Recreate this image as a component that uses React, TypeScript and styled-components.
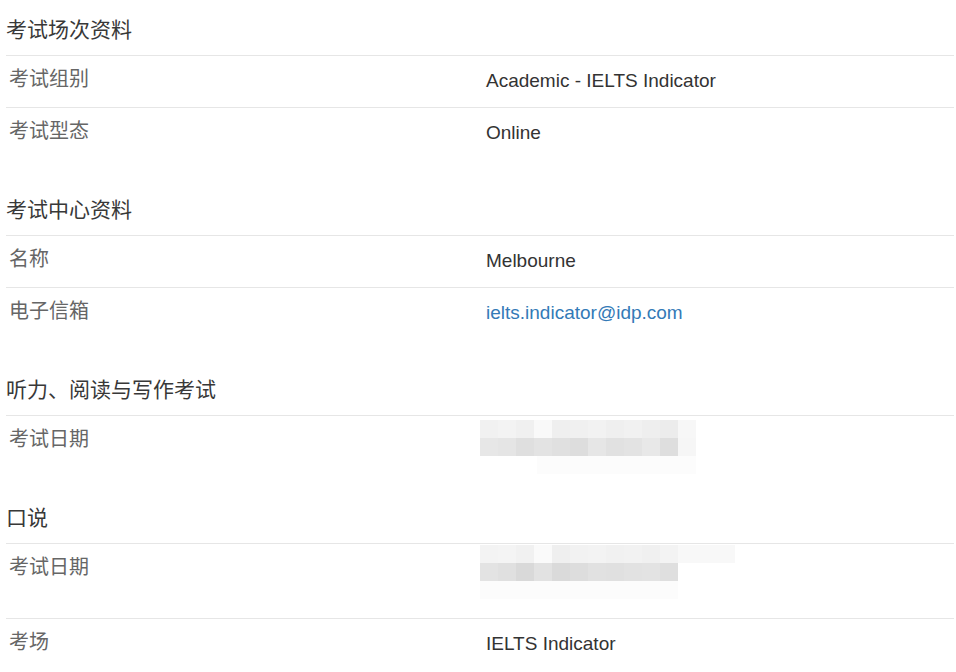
import React from "react";
import styled, { createGlobalStyle } from "styled-components";

const GlobalStyle = createGlobalStyle`
  html, body { margin: 0; padding: 0; background: #ffffff; }
  body {
    font-family: "Liberation Sans", "Noto Sans CJK SC", sans-serif;
    color: #333333;
  }
`;

const Page = styled.div`
  margin: 0 2px 0 6px;
  display: flex;
  flex-direction: column;
  gap: 21px;
`;

const Section = styled.section`
  display: flex;
  flex-direction: column;
`;

const Title = styled.h3`
  margin: 0;
  padding: 15px 0 10px 0;
  font-size: 21px;
  line-height: 30px;
  font-weight: 400;
  color: #383838;
  border-bottom: 1px solid #e6e6e6;
`;

const Row = styled.div`
  display: grid;
  grid-template-columns: 474px 1fr;
  padding: 12px 0 16px 0;
  & + & {
    border-top: 1px solid #e6e6e6;
  }
`;

const Label = styled.div`
  padding-left: 3px;
  font-size: 20px;
  line-height: 23px;
  color: #666666;
`;

const Value = styled.div`
  padding: 1px 0 0 6px;
  margin-bottom: -1px;
  font-size: 19px;
  line-height: 23px;
  color: #333333;
`;

const Link = styled.a`
  color: #337ab7;
  text-decoration: none;
`;

const Mosaic = styled.div<{ $mt: number; $mb: number }>`
  margin-left: -6px;
  margin-top: ${(p) => p.$mt}px;
  margin-bottom: ${(p) => p.$mb}px;
  display: flex;
  flex-direction: column;
`;

const Band = styled.div<{ $indent?: number }>`
  display: flex;
  height: 18px;
  padding-left: ${(p) => p.$indent || 0}px;
`;

const Cell = styled.span<{ $c: string; $w?: number }>`
  display: block;
  width: ${(p) => p.$w || 18}px;
  height: 100%;
  background: ${(p) => p.$c};
`;

type BandSpec = { indent?: number; cells: [string, number?][] };

const mosaicA: BandSpec[] = [
  {
    cells: [
      ["#f1f1f1"], ["#f3f3f3"], ["#f0f0f0"], ["#f9f9f9"], ["#efefef"], ["#f0f0f0"],
      ["#f2f2f2"], ["#efefef"], ["#f1f1f1"], ["#eeeeee"], ["#ececec"], ["#f7f7f7"],
    ],
  },
  {
    cells: [
      ["#e7e7e7"], ["#e5e5e5"], ["#dfdfdf"], ["#e3e3e3"], ["#e0e0e0"], ["#dddddd"],
      ["#e6e6e6"], ["#e1e1e1"], ["#e3e3e3"], ["#e8e8e8"], ["#dedede"], ["#f6f6f6"],
    ],
  },
  {
    indent: 57,
    cells: [["#fcfcfc", 159]],
  },
];

const mosaicB: BandSpec[] = [
  {
    cells: [
      ["#f3f3f3"], ["#f4f4f4"], ["#f1f1f1"], ["#fafafa"], ["#efefef"], ["#f2f2f2"],
      ["#f3f3f3"], ["#f1f1f1"], ["#f2f2f2"], ["#f0f0f0"], ["#f3f3f3"], ["#f8f8f8", 57],
    ],
  },
  {
    cells: [
      ["#e3e3e3"], ["#e0e0e0"], ["#d9d9d9"], ["#e2e2e2"], ["#dadada"], ["#dddddd"],
      ["#e1e1e1"], ["#e0e0e0"], ["#e2e2e2"], ["#e3e3e3"], ["#dfdfdf"],
    ],
  },
  {
    cells: [["#fcfcfc", 198]],
  },
];

const Blurred: React.FC<{ bands: BandSpec[]; mt: number; mb: number }> = ({ bands, mt, mb }) => (
  <Mosaic $mt={mt} $mb={mb} aria-hidden="true">
    {bands.map((b, i) => (
      <Band key={i} $indent={b.indent}>
        {b.cells.map(([c, w], j) => (
          <Cell key={j} $c={c} $w={w} />
        ))}
      </Band>
    ))}
  </Mosaic>
);

export default function App() {
  return (
    <>
      <GlobalStyle />
      <Page>
        <Section>
          <Title>考试场次资料</Title>
          <Row>
            <Label>考试组别</Label>
            <Value>Academic - IELTS Indicator</Value>
          </Row>
          <Row>
            <Label>考试型态</Label>
            <Value>Online</Value>
          </Row>
        </Section>

        <Section>
          <Title>考试中心资料</Title>
          <Row>
            <Label>名称</Label>
            <Value>Melbourne</Value>
          </Row>
          <Row>
            <Label>电子信箱</Label>
            <Value>
              <Link href="#">ielts.indicator@idp.com</Link>
            </Value>
          </Row>
        </Section>

        <Section>
          <Title>听力、阅读与写作考试</Title>
          <Row>
            <Label>考试日期</Label>
            <Value>
              <Blurred bands={mosaicA} mt={-9} mb={-22} />
            </Value>
          </Row>
        </Section>

        <Section>
          <Title>口说</Title>
          <Row>
            <Label>考试日期</Label>
            <Value>
              <Blurred bands={mosaicB} mt={-12} mb={4} />
            </Value>
          </Row>
          <Row>
            <Label>考场</Label>
            <Value>IELTS Indicator</Value>
          </Row>
        </Section>
      </Page>
    </>
  );
}
